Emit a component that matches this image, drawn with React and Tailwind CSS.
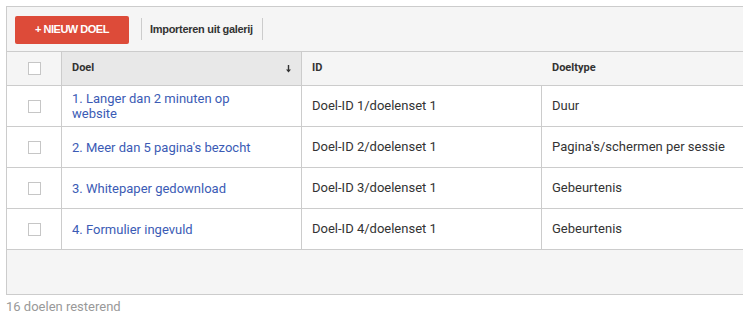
const rows = [
  { name: '1. Langer dan 2 minuten op website', id: 'Doel-ID 1/doelenset 1', type: 'Duur' },
  { name: "2. Meer dan 5 pagina's bezocht", id: 'Doel-ID 2/doelenset 1', type: "Pagina's/schermen per sessie" },
  { name: '3. Whitepaper gedownload', id: 'Doel-ID 3/doelenset 1', type: 'Gebeurtenis' },
  { name: '4. Formulier ingevuld', id: 'Doel-ID 4/doelenset 1', type: 'Gebeurtenis' },
];

function Checkbox() {
  return <span className="block w-[13px] h-[13px] border border-[#c6c6c6] bg-white" />;
}

export default function App() {
  return (
    <div className="w-[743px] h-[317px] bg-white font-['Roboto',sans-serif] overflow-hidden">
      <div className="ml-[6px] mt-[6px] border-t border-l border-b border-[#cccccc] bg-[#f5f5f5]">
        {/* toolbar */}
        <div className="h-[45px] flex items-center pl-[8px] border-b border-[#cccccc]">
          <button className="h-[28px] w-[114px] mt-[1px] rounded-[2px] bg-[#dd4b39] text-white text-[11px] font-bold font-['Liberation_Sans',Arial,sans-serif] tracking-[-0.5px]">
            + NIEUW DOEL
          </button>
          <span className="ml-[12px] h-[22px] border-l border-[#cccccc]" />
          <span className="ml-[8px] text-[11px] font-bold text-[#333] font-['Liberation_Sans',Arial,sans-serif] tracking-[-0.3px]">
            Importeren uit galerij
          </span>
          <span className="ml-[9px] h-[22px] border-l border-[#cccccc]" />
        </div>

        {/* header */}
        <div className="grid grid-cols-[55px_240px_240px_1fr] h-[34px] text-[11px] font-bold text-[#333] border-b border-[#cccccc]">
          <div className="flex items-center justify-center border-r border-[#cccccc] pl-[1px]">
            <Checkbox />
          </div>
          <div className="flex items-center justify-between px-[10px] bg-[#e8e8e8] border-r border-[#cccccc]">
            <span>Doel</span>
            <svg width="7" height="9" viewBox="0 0 7 9" className="mr-[-1px]">
              <path d="M3.5 1v6" stroke="#333" strokeWidth="1.4" />
              <path d="M1 5.5h5L3.5 8.5z" fill="#333" />
            </svg>
          </div>
          <div className="flex items-center px-[10px]">ID</div>
          <div className="flex items-center px-[10px]">Doeltype</div>
        </div>

        {/* rows */}
        {rows.map((r) => (
          <div
            key={r.id}
            className="grid grid-cols-[55px_240px_240px_1fr] h-[41px] bg-white text-[13px] border-b border-[#cccccc]"
          >
            <div className="flex items-center justify-center border-r border-[#cccccc] pl-[1px]">
              <Checkbox />
            </div>
            <div className="flex items-center px-[10px] border-r border-[#cccccc]">
              <a className="text-[#3b5bb5] leading-[15px] pr-[30px]">{r.name}</a>
            </div>
            <div className="flex items-center px-[10px] border-r border-[#cccccc] text-[#333]">{r.id}</div>
            <div className="flex items-center px-[10px] text-[#333]">{r.type}</div>
          </div>
        ))}

        <div className="h-[44px]" />
      </div>
      <div className="ml-[6px] mt-[2px] text-[13px] text-[#999]">16 doelen resterend</div>
    </div>
  );
}
